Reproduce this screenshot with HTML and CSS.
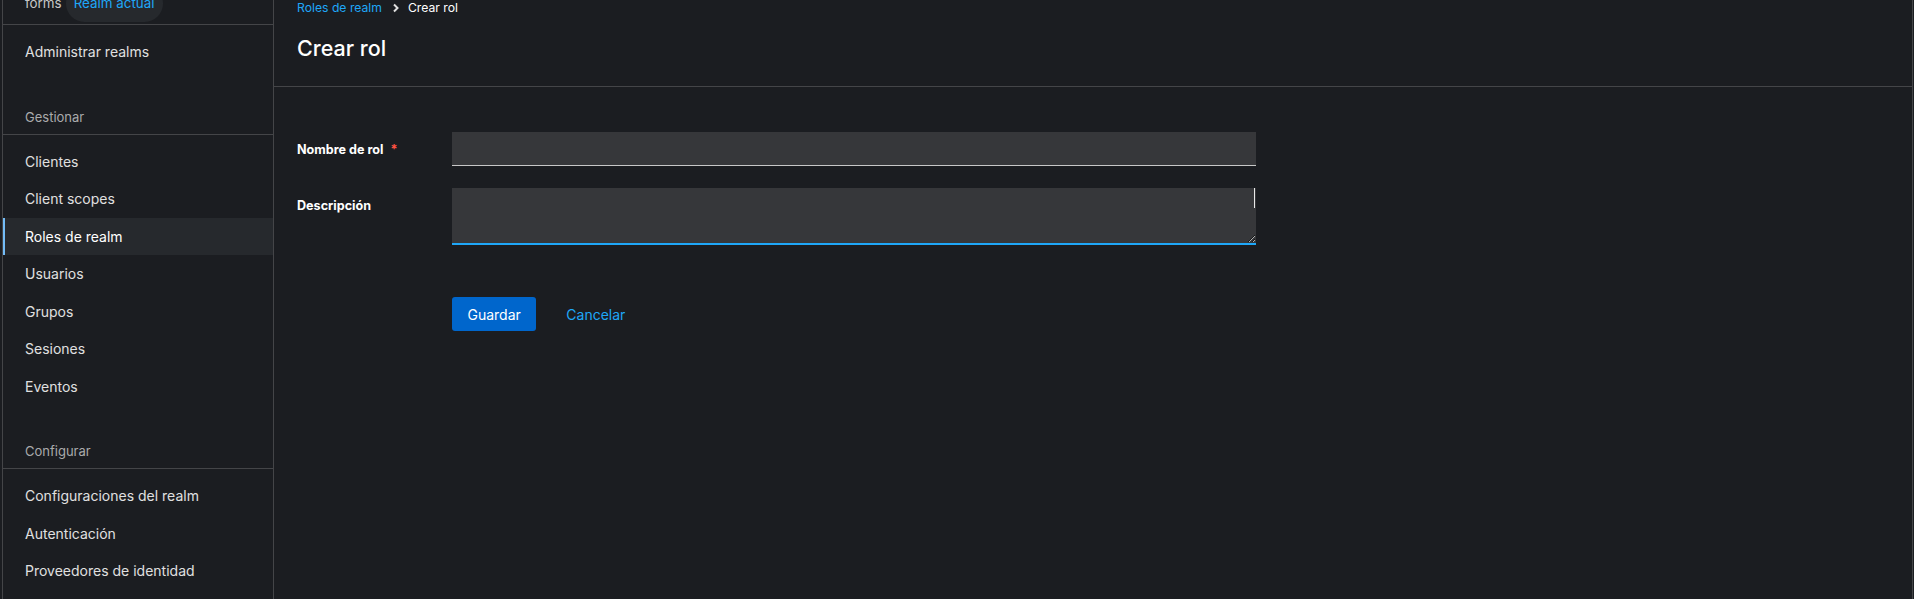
FILE: index.html
```html
<!DOCTYPE html>
<html lang="es">
<head>
<meta charset="utf-8">
<title>Crear rol</title>
<link rel="stylesheet" href="styles.css">
</head>
<body>
<div class="app">
  <nav class="sidebar">
    <div class="realm-row">
      <div class="realm-inner">
        <span class="realm-name">forms</span>
        <span class="realm-badge">Realm actual</span>
      </div>
    </div>
    <ul class="nav-list">
      <li><a class="nav-link">Administrar realms</a></li>
    </ul>
    <section class="nav-section">
      <h2 class="nav-title">Gestionar</h2>
      <ul class="nav-list">
        <li><a class="nav-link">Clientes</a></li>
        <li><a class="nav-link">Client scopes</a></li>
        <li><a class="nav-link is-active">Roles de realm</a></li>
        <li><a class="nav-link">Usuarios</a></li>
        <li><a class="nav-link">Grupos</a></li>
        <li><a class="nav-link">Sesiones</a></li>
        <li><a class="nav-link">Eventos</a></li>
      </ul>
    </section>
    <section class="nav-section">
      <h2 class="nav-title">Configurar</h2>
      <ul class="nav-list">
        <li><a class="nav-link">Configuraciones del realm</a></li>
        <li><a class="nav-link">Autenticación</a></li>
        <li><a class="nav-link">Proveedores de identidad</a></li>
      </ul>
    </section>
  </nav>
  <main class="main">
    <header class="page-header">
      <ol class="breadcrumb">
        <li><a class="crumb-link">Roles de realm</a></li>
        <li class="crumb-sep"><svg width="8" height="12" viewBox="0 0 8 12"><path d="M2 2.5 L5.5 6 L2 9.5" fill="none" stroke="#e0e0e0" stroke-width="2"/></svg></li>
        <li class="crumb-current">Crear rol</li>
      </ol>
      <h1 class="page-title">Crear rol</h1>
    </header>
    <section class="page-body">
      <form class="form">
        <label class="form-label" for="name">Nombre de rol <span class="req">*</span></label>
        <input class="form-input" id="name" type="text">
        <label class="form-label" for="desc">Descripción</label>
        <div class="textarea-wrap">
          <textarea class="form-textarea" id="desc"></textarea>
        </div>
        <div class="form-actions">
          <button type="button" class="btn-primary">Guardar</button>
          <button type="button" class="btn-link">Cancelar</button>
        </div>
      </form>
    </section>
  </main>
</div>
</body>
</html>
```
FILE: styles.css
```css
* { box-sizing: border-box; }

html, body {
  margin: 0;
  padding: 0;
  background: #1b1d21;
  height: 599px;
  overflow: hidden;
}

body {
  font-family: Inter, "Liberation Sans", Arial, sans-serif;
  font-size: 14px;
  color: #e0e0e0;
}

.app {
  display: flex;
  height: 599px;
  padding-left: 2px;
  padding-right: 1px;
}

/* Sidebar */
.sidebar {
  width: 272px;
  flex: none;
  border-left: 1px solid #444548;
  border-right: 1px solid #444548;
  background: #1b1d21;
  overflow: hidden;
}

.realm-row {
  height: 25px;
  border-bottom: 1px solid #444548;
  overflow: hidden;
  padding-left: 22px;
}

.realm-inner {
  display: flex;
  align-items: center;
  gap: 4px;
  height: 29px;
  margin-top: -11px;
  line-height: 21px;
  font-size: 13.4px;
}

.realm-name { color: #c7c7c7; }

.realm-badge {
  background: #26292d;
  color: #1fa7f8;
  padding: 8px 8px;
  border-radius: 30px;
}

.nav-list {
  list-style: none;
  margin: 0;
  padding: 8px 0;
}

.nav-link {
  display: block;
  position: relative;
  padding: 8px 22px;
  line-height: 21.5px;
  color: #e0e0e0;
  text-decoration: none;
}

.nav-link.is-active {
  background: #26292d;
  color: #ffffff;
}

.nav-link.is-active::before {
  content: "";
  position: absolute;
  left: -1px;
  top: 0;
  bottom: 0;
  width: 3px;
  background: #73bcf7;
}

.nav-title {
  margin: 0;
  padding: 28px 22px 6px;
  font-size: 13px;
  font-weight: 400;
  line-height: 21px;
  color: #aaabac;
  border-bottom: 1px solid #444548;
}

/* Main */
.main {
  flex: 1;
  border-right: 1px solid #444548;
  min-width: 0;
}

.page-header {
  padding: 0 23px 23px;
  border-bottom: 1px solid #444548;
}

.breadcrumb {
  list-style: none;
  margin: -3px 0 0;
  padding: 0;
  display: flex;
  align-items: center;
  line-height: 21px;
  font-size: 12.2px;
}

.crumb-link { color: #1fa7f8; }

.crumb-sep {
  display: flex;
  align-items: center;
  padding: 0 8px 0 10px;
}

.crumb-current { color: #ffffff; }

.page-title {
  margin: 15px 0 0;
  font-size: 21.5px;
  font-weight: 500;
  line-height: 30px;
  color: #ffffff;
}

.page-body {
  padding: 45px 23px 0;
}

.form {
  display: grid;
  grid-template-columns: 155px 804px;
  row-gap: 22px;
}

.form-label {
  padding-top: 6.5px;
  font-weight: 700;
  font-size: 12.6px;
  line-height: 21px;
  color: #ffffff;
}

.req {
  color: #fe5142;
  margin-left: 4px;
}

.form-input {
  height: 34px;
  border: none;
  border-bottom: 1px solid #c7c7c7;
  background: #36373a;
  color: #e0e0e0;
  font: inherit;
  padding: 0 8px;
  outline: none;
}

.textarea-wrap {
  position: relative;
  height: 57px;
}

.textarea-wrap::after {
  content: "";
  position: absolute;
  right: 1px;
  top: 0;
  width: 1px;
  height: 20px;
  background: #e8e8e8;
}

.form-textarea {
  display: block;
  width: 100%;
  height: 57px;
  border: none;
  border-bottom: 2px solid #1fa7f8;
  background: #36373a;
  color: #e0e0e0;
  font: inherit;
  padding: 6px 8px;
  outline: none;
  resize: vertical;
  color-scheme: dark;
}

.form-actions {
  grid-column: 2;
  margin-top: 30px;
  display: flex;
  align-items: center;
  gap: 14px;
}

.btn-primary {
  height: 34px;
  padding: 0 15.5px;
  border: none;
  border-radius: 3px;
  background: #0066cc;
  color: #ffffff;
  font: inherit;
  font-size: 14px;
}

.btn-link {
  height: 34px;
  padding: 0 16px;
  border: none;
  background: transparent;
  color: #1fa7f8;
  font: inherit;
  font-size: 14px;
}
```
